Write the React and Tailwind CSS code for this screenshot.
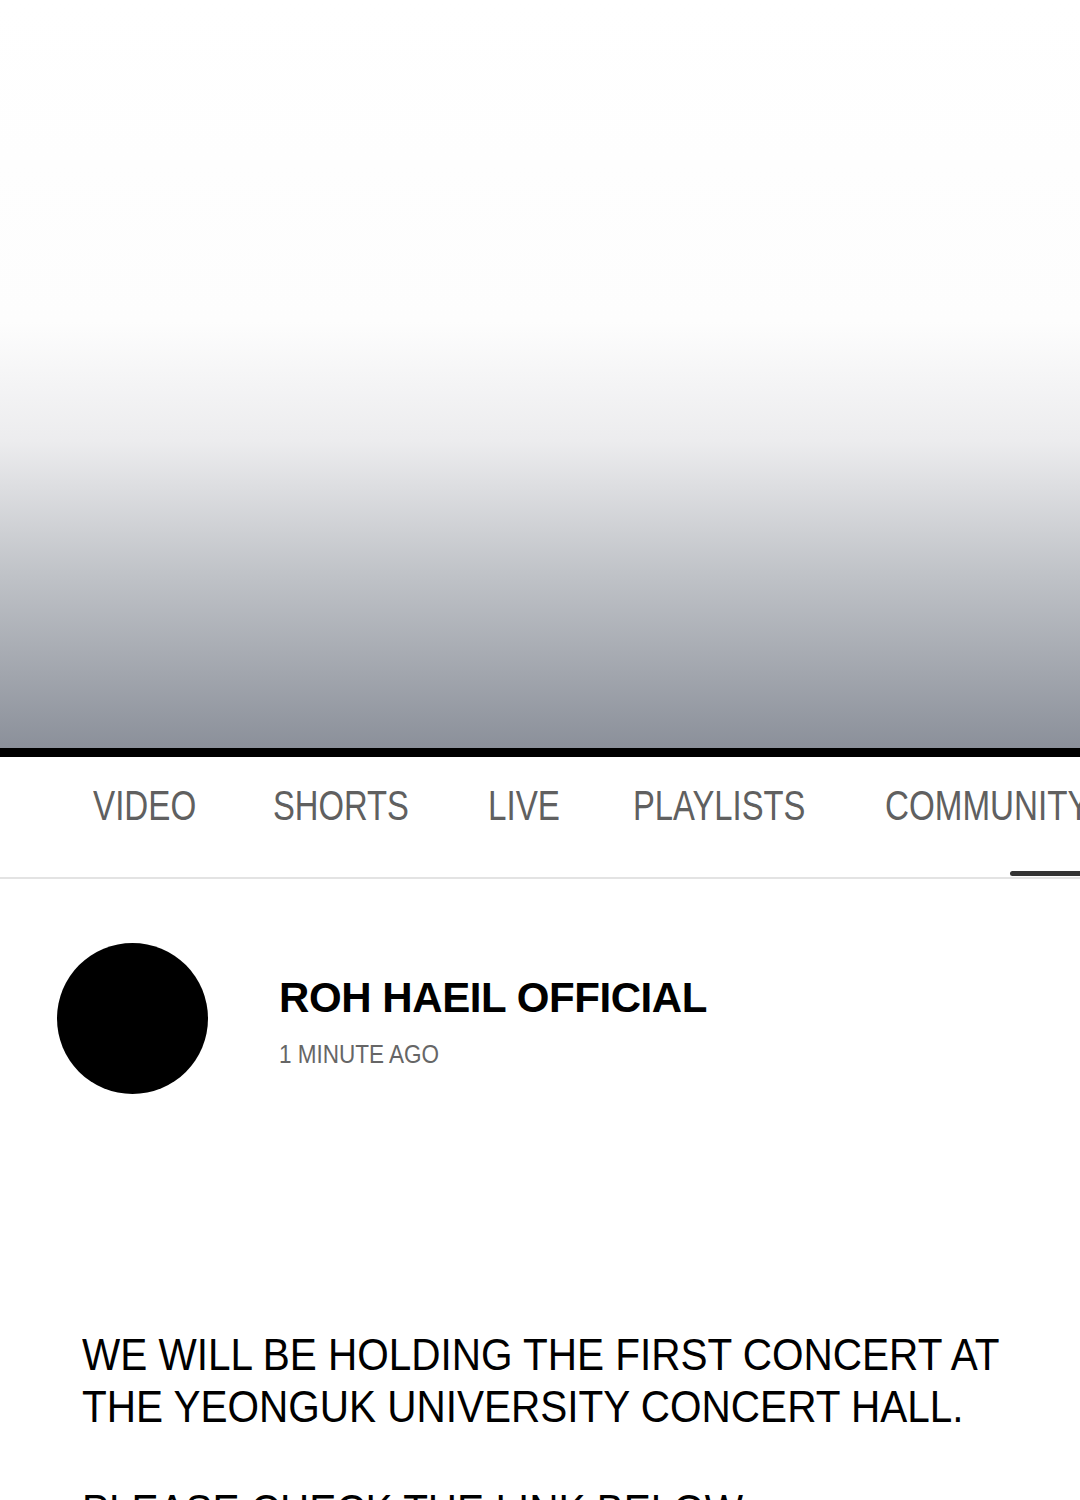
export default function App() {
  const sans = { fontFamily: '"Liberation Sans", Arial, sans-serif' };
  return (
    <div className="w-[1080px] h-[1500px] overflow-hidden bg-white" style={sans}>
      <div className="h-[748px] bg-[linear-gradient(to_bottom,#ffffff_0%,#fdfdfd_43%,#ececee_59%,#bfc2c7_77%,#8b909a_100%)]" />
      <div className="h-[9px] bg-black" />
      <div className="relative h-[122px] border-b-2 border-[#e3e3e3]">
        <div className="flex items-center pt-[29px] pl-[93px] text-[42px] leading-[40px] text-[#606060] whitespace-nowrap">
          <span className="w-[180px] shrink-0"><span className="inline-block origin-left scale-x-[0.79]">VIDEO</span></span>
          <span className="w-[215px] shrink-0"><span className="inline-block origin-left scale-x-[0.78]">SHORTS</span></span>
          <span className="w-[145px] shrink-0"><span className="inline-block origin-left scale-x-[0.79]">LIVE</span></span>
          <span className="w-[252px] shrink-0"><span className="inline-block origin-left scale-x-[0.78]">PLAYLISTS</span></span>
          <span className="shrink-0"><span className="inline-block origin-left scale-x-[0.79]">COMMUNITY</span></span>
        </div>
        <div className="absolute right-0 bottom-[1px] h-[5px] w-[70px] rounded-l-full bg-[#333333]" />
      </div>
      <div className="flex items-start pt-[64px] pl-[57px]">
        <div className="h-[151px] w-[151px] rounded-full bg-black" />
        <div className="ml-[71px] pt-[32px]">
          <div className="text-[42px] leading-[46px] font-bold text-black tracking-[-0.01em]">ROH HAEIL OFFICIAL</div>
          <div className="mt-[19px] text-[25px] leading-[28px] text-[#666666] whitespace-nowrap">
            <span className="inline-block origin-left scale-x-[0.9]">1 MINUTE AGO</span>
          </div>
        </div>
      </div>
      <div className="pl-[82px] pt-[235px] text-[45px] leading-[52px] text-black whitespace-nowrap">
        <p><span className="inline-block origin-left scale-x-[0.9]">WE WILL BE HOLDING THE FIRST CONCERT AT</span></p>
        <p><span className="inline-block origin-left scale-x-[0.9]">THE YEONGUK UNIVERSITY CONCERT HALL.</span></p>
        <p className="mt-[52px]"><span className="inline-block origin-left scale-x-[0.9]">PLEASE CHECK THE LINK BELOW.</span></p>
      </div>
    </div>
  );
}
